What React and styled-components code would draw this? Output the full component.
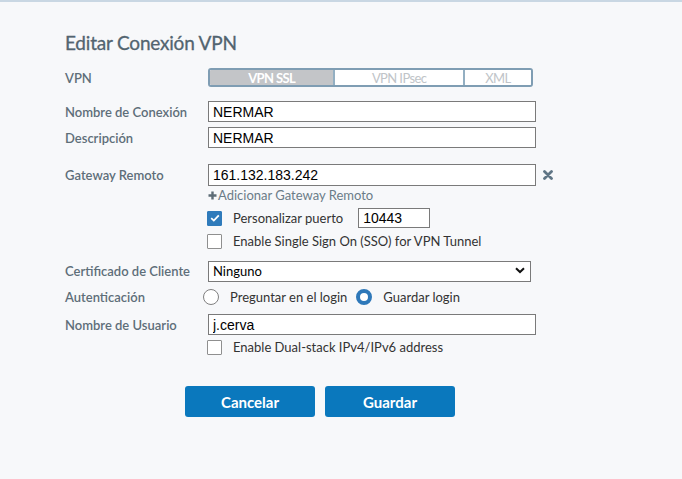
import React from "react";
import styled, { createGlobalStyle } from "styled-components";

const Global = createGlobalStyle`
  html, body { margin: 0; padding: 0; background: #f7f8fa; }
  body { font-family: Lato, "Open Sans", sans-serif; }
  * { box-sizing: border-box; }
`;

const Page = styled.div`
  width: 682px;
  height: 479px;
  background: #f7f8fa;
  border-top: 2px solid #c9d7e3;
  padding: 29px 0 0 65px;
`;

const Title = styled.h1`
  margin: 0 0 13px 0;
  font-size: 19px;
  font-weight: 400;
  color: #526470;
  line-height: 24px;
  letter-spacing: -0.2px;
  -webkit-text-stroke: 0.3px #526470;
`;

const Row = styled.div`
  display: grid;
  grid-template-columns: 143px auto;
  align-items: center;
  height: ${(p) => p.$h || 21}px;
  margin-top: ${(p) => p.$mt || 0}px;
`;

const Label = styled.div`
  font-size: 13px;
  color: #5e6e79;
  font-weight: 600;
  white-space: nowrap;
`;

const Segmented = styled.div`
  display: flex;
  width: 325px;
  height: 19px;
  border: 2px solid #7f9db3;
  border-radius: 3px;
  overflow: hidden;
  background: #fff;
`;

const Segment = styled.div`
  width: ${(p) => p.$w}px;
  display: flex;
  align-items: center;
  justify-content: center;
  font-size: 13px;
  background: ${(p) => (p.$active ? "#c3c5c8" : "#fff")};
  color: ${(p) => (p.$active ? "#fff" : "#c0c4c8")};
  font-weight: ${(p) => (p.$active ? 700 : 400)};
  border-left: ${(p) => (p.$first ? "none" : "2px solid #93afc2")};
  letter-spacing: -0.6px;
`;

const TextInput = styled.input`
  width: ${(p) => p.$w || 328}px;
  height: ${(p) => p.$h || 21}px;
  margin-left: ${(p) => p.$ml || 0}px;
  border: 1px solid #7a7a7a;
  background: #fff;
  padding: 0 4px;
  font-family: "Liberation Sans", Arial, sans-serif;
  font-size: 14px;
  color: #000;
  outline: none;
`;

const InlineGroup = styled.div`
  display: flex;
  align-items: center;
  margin-left: ${(p) => p.$ml || 0}px;
`;

const RemoveIcon = styled.svg`
  margin-left: 7px;
  flex: none;
`;

const AddLink = styled.div`
  display: flex;
  align-items: center;
  font-size: 13px;
  color: #6b7c88;
`;

const PlusIcon = styled.svg`
  margin-right: 1px;
  flex: none;
`;

const Box = styled.span`
  width: 15px;
  height: 15px;
  display: inline-flex;
  align-items: center;
  justify-content: center;
  background: ${(p) => (p.$checked ? "#2f7bbb" : "#fff")};
  border: 1px solid ${(p) => (p.$checked ? "#2f7bbb" : "#8f8f8f")};
  border-radius: 1px;
  margin-left: -1px;
`;

const OptionText = styled.span`
  font-size: 13px;
  color: #333;
  margin-left: 11px;
  white-space: nowrap;
`;

const Radio = styled.span`
  width: 16px;
  height: 16px;
  border-radius: 50%;
  display: inline-block;
  background: #fff;
  margin-left: ${(p) => p.$ml || 0}px;
  border: ${(p) => (p.$checked ? "4px solid #2e78b9" : "1px solid #808080")};
`;

const SelectWrap = styled.div`
  position: relative;
  width: 323px;
  height: 21px;
`;

const Select = styled.select`
  appearance: none;
  width: 100%;
  height: 100%;
  border: 1px solid #7a7a7a;
  background: #fff;
  padding: 0 4px;
  font-family: Lato, sans-serif;
  font-size: 13px;
  color: #000;
  outline: none;
`;

const Chevron = styled.svg`
  position: absolute;
  right: 6px;
  top: 7px;
  pointer-events: none;
`;

const Buttons = styled.div`
  display: flex;
  gap: 10px;
  margin: 31px 0 0 120px;
`;

const Button = styled.button`
  width: 130px;
  height: 31px;
  border: none;
  border-radius: 3px;
  background: #0a78bd;
  color: #fff;
  font-family: Lato, sans-serif;
  font-size: 15px;
  font-weight: 700;
`;

function Check({ checked }) {
  return (
    <Box $checked={checked}>
      {checked && (
        <svg width="10" height="8" viewBox="0 0 10 8">
          <path d="M1.2 4.2 L3.8 6.6 L8.8 1.4" fill="none" stroke="#fff" strokeWidth="1.8" />
        </svg>
      )}
    </Box>
  );
}

export default function App() {
  return (
    <Page>
      <Global />
      <Title>Editar Conexión VPN</Title>
      <Row $h={19}>
        <Label>VPN</Label>
        <Segmented>
          <Segment $w={125} $active $first>VPN SSL</Segment>
          <Segment $w={131}>VPN IPsec</Segment>
          <Segment $w={69}>XML</Segment>
        </Segmented>
      </Row>
      <Row $mt={14}>
        <Label>Nombre de Conexión</Label>
        <TextInput defaultValue="NERMAR" />
      </Row>
      <Row $mt={5}>
        <Label>Descripción</Label>
        <TextInput defaultValue="NERMAR" />
      </Row>
      <Row $mt={16} $h={22}>
        <Label>Gateway Remoto</Label>
        <InlineGroup>
          <TextInput $h={22} defaultValue="161.132.183.242" />
          <RemoveIcon width="10" height="10" viewBox="0 0 10 10">
            <path d="M1.5 1.5 L8.5 8.5 M8.5 1.5 L1.5 8.5" stroke="#5f7585" strokeWidth="2.8" strokeLinecap="round" />
          </RemoveIcon>
        </InlineGroup>
      </Row>
      <Row $h={18}>
        <span />
        <AddLink>
          <PlusIcon width="9" height="9" viewBox="0 0 9 9">
            <path d="M4.5 0.5 V8.5 M0.5 4.5 H8.5" stroke="#5d6c76" strokeWidth="2.4" />
          </PlusIcon>
          Adicionar Gateway Remoto
        </AddLink>
      </Row>
      <Row $mt={4} $h={20}>
        <span />
        <InlineGroup>
          <Check checked />
          <OptionText>Personalizar puerto</OptionText>
          <TextInput $w={72} $h={20} $ml={15} defaultValue="10443" />
        </InlineGroup>
      </Row>
      <Row $mt={5} $h={16}>
        <span />
        <InlineGroup>
          <Check />
          <OptionText>Enable Single Sign On (SSO) for VPN Tunnel</OptionText>
        </InlineGroup>
      </Row>
      <Row $mt={11} $h={21}>
        <Label>Certificado de Cliente</Label>
        <SelectWrap>
          <Select defaultValue="Ninguno">
            <option>Ninguno</option>
          </Select>
          <Chevron width="10" height="7" viewBox="0 0 10 7">
            <path d="M1 1.2 L5 5 L9 1.2" fill="none" stroke="#111" strokeWidth="2" />
          </Chevron>
        </SelectWrap>
      </Row>
      <Row $mt={7} $h={18}>
        <Label>Autenticación</Label>
        <InlineGroup $ml={-5}>
          <Radio />
          <OptionText>Preguntar en el login</OptionText>
          <Radio $checked $ml={9} />
          <OptionText>Guardar login</OptionText>
        </InlineGroup>
      </Row>
      <Row $mt={8}>
        <Label>Nombre de Usuario</Label>
        <TextInput defaultValue="j.cerva" />
      </Row>
      <Row $mt={4} $h={16}>
        <span />
        <InlineGroup>
          <Check />
          <OptionText>Enable Dual-stack IPv4/IPv6 address</OptionText>
        </InlineGroup>
      </Row>
      <Buttons>
        <Button>Cancelar</Button>
        <Button>Guardar</Button>
      </Buttons>
    </Page>
  );
}
